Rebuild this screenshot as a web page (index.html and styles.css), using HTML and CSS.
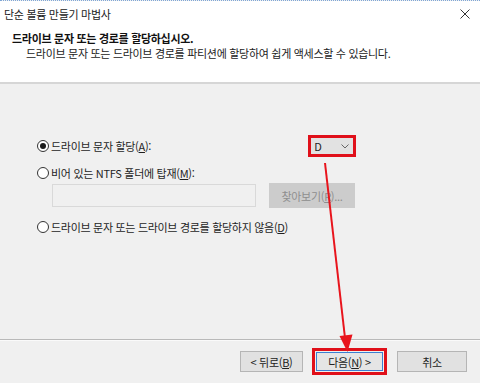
FILE: index.html
```html
<!DOCTYPE html>
<html lang="ko">
<head>
<meta charset="utf-8">
<link rel="stylesheet" href="styles.css">
</head>
<body>
<div class="window">
  <div class="header">
    <div class="titlebar">
      <span class="title">단순 볼륨 만들기 마법사</span>
      <svg class="close" width="10" height="10" viewBox="0 0 10 10"><path d="M0.5 0.5 L9.5 9.5 M9.5 0.5 L0.5 9.5" stroke="#333" stroke-width="1"/></svg>
    </div>
    <div class="heading">드라이브 문자 또는 경로를 할당하십시오.</div>
    <div class="subtext">드라이브 문자 또는 드라이브 경로를 파티션에 할당하여 쉽게 액세스할 수 있습니다.</div>
  </div>
  <div class="body">
    <div class="row row1">
      <label class="radio"><span class="dot checked"></span>드라이브 문자 할당(<u>A</u>):</label>
      <div class="select-wrap">
        <div class="select"><span>D</span>
          <svg width="8" height="5" viewBox="0 0 8 5"><path d="M0.5 0.5 L4 4 L7.5 0.5" fill="none" stroke="#666" stroke-width="1"/></svg>
        </div>
      </div>
    </div>
    <div class="row row2">
      <label class="radio"><span class="dot"></span>비어 있는 NTFS 폴더에 탑재(<u>M</u>):</label>
    </div>
    <div class="row row-input">
      <div class="textbox"></div>
      <div class="browse">찾아보기(<u>R</u>)...</div>
    </div>
    <div class="row row3">
      <label class="radio"><span class="dot"></span>드라이브 문자 또는 드라이브 경로를 할당하지 않음(<u>D</u>)</label>
    </div>
  </div>
  <div class="footer">
    <div class="btn">&lt; 뒤로(<u>B</u>)</div>
    <div class="next-wrap"><div class="btn primary">다음(<u>N</u>) &gt;</div></div>
    <div class="btn cancel">취소</div>
  </div>
  <svg class="arrow" width="480" height="383" viewBox="0 0 480 383">
    <path d="M325 162 L345 337" stroke="#e8141c" stroke-width="2" fill="none"/>
    <path d="M339.5 335 L352.5 333.5 L347.5 351 Z" fill="#e8141c"/>
  </svg>
</div>
</body>
</html>
```
FILE: styles.css
```css
* { box-sizing: border-box; }
html, body { margin: 0; padding: 0; }
body {
  width: 480px;
  height: 383px;
  overflow: hidden;
  font-family: "Noto Sans CJK KR", "Noto Sans", sans-serif;
  font-size: 11px;
  letter-spacing: -0.3px;
  color: #1e1e1e;
  background: #f0f0f0;
}
.window {
  position: relative;
  width: 480px;
  height: 383px;
  display: flex;
  flex-direction: column;
  border-top: 1px dotted #7ea6d6;
}
.header {
  background: #ffffff;
  height: 83px;
  border-bottom: 2px solid #d6d6d6;
  padding: 0 0 0 4px;
  flex: none;
}
.titlebar {
  display: flex;
  justify-content: space-between;
  align-items: center;
  height: 26px;
  padding-right: 10px;
}
.title { font-size: 11px; line-height: 1; color: #222; }
.heading {
  font-weight: bold;
  font-size: 11px;
  line-height: 16px;
  margin-left: 8px;
  margin-top: 3px;
  color: #111;
}
.subtext {
  font-size: 11px;
  line-height: 14px;
  margin-left: 22px;
  color: #222;
}
.body {
  flex: 1;
  background: #f0f0f0;
  padding: 52px 0 0 37px;
  display: flex;
  flex-direction: column;
}
.row { display: flex; align-items: center; }
.radio {
  display: flex;
  align-items: center;
  font-size: 11px;
  color: #1e1e1e;
  line-height: 14px;
}
.dot {
  width: 12px;
  height: 12px;
  border: 1px solid #333;
  border-radius: 50%;
  background: #fff;
  margin-right: 2px;
  position: relative;
  flex: none;
}
.dot.checked::after {
  content: "";
  position: absolute;
  left: 2px; top: 2px;
  width: 6px; height: 6px;
  border-radius: 50%;
  background: #1a1a1a;
}
.row1 { height: 22px; margin-top: -1px; }
.select-wrap {
  margin-left: 157px;
  border: 3px solid #e0101a;
  width: 48px;
  height: 22px;
  padding: 0;
}
.select {
  background: #e2e2e2;
  height: 100%;
  display: flex;
  align-items: center;
  justify-content: space-between;
  padding: 0 4px 0 3px;
  font-size: 11px;
  color: #222;
}
.row2 { margin-top: 9px; height: 14px; }
.row-input { margin-top: 3px; margin-left: 15px; }
.textbox {
  width: 204px;
  height: 23px;
  border: 1px solid #d9d9d9;
  background: #f0f0f0;
}
.browse {
  margin-left: 13px;
  width: 86px;
  height: 25px;
  background: #cccccc;
  color: #8e8e8e;
  display: flex;
  align-items: center;
  justify-content: center;
  font-size: 11px;
}
.row3 { margin-top: 12px; }
.footer {
  flex: none;
  height: 44px;
  border-top: 1px solid #b9b9b9;
  box-shadow: inset 0 1px 0 #fafafa;
  display: flex;
  align-items: center;
  padding: 0 0 0 240px;
}
.btn {
  width: 63px;
  height: 21px;
  background: #e1e1e1;
  border: 1px solid #b5b5b5;
  display: flex;
  align-items: center;
  justify-content: center;
  font-size: 11px;
  color: #222;
}
.next-wrap {
  margin-left: 9px;
  border: 3px solid #e0101a;
  padding: 1px;
}
.btn.primary {
  width: 67px;
  height: 19px;
  border: 1px solid #3c7fd1;
  background: #e5e5e5;
}
.cancel {
  margin-left: 10px;
  width: 70px;
}
.arrow {
  position: absolute;
  left: 0;
  top: 0;
  pointer-events: none;
}
u { text-decoration: underline; text-underline-offset: 1px; }
```
